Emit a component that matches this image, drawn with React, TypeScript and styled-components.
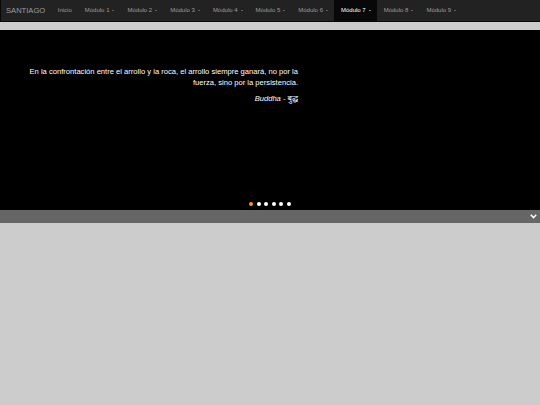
import React from 'react';
import styled, { createGlobalStyle } from 'styled-components';

const modules = [1, 2, 3, 4, 5, 6, 7, 8, 9];
const ACTIVE = 7;

const Global = createGlobalStyle`
  html, body {
    margin: 0;
    padding: 0;
    background: #cccccc;
    font-family: "Liberation Sans", Arial, sans-serif;
  }
`;

const Page = styled.div`
  width: 540px;
  height: 405px;
  background: #cccccc;
  display: flex;
  flex-direction: column;
`;

const Navbar = styled.nav`
  height: 22px;
  background: #222222;
  border-left: 1px solid #080808;
  border-bottom: 1px solid #080808;
  box-sizing: border-box;
  display: flex;
  align-items: stretch;
`;

const Brand = styled.a`
  color: #9d9d9d;
  font-size: 7.6px;
  line-height: 22px;
  padding: 0 6px 0 5px;
`;

const NavItem = styled.a<{ $active?: boolean }>`
  color: ${p => (p.$active ? '#ffffff' : '#9d9d9d')};
  background: ${p => (p.$active ? '#080808' : 'transparent')};
  font-size: 6px;
  line-height: 21px;
  padding: 0 6.5px;
  white-space: nowrap;
  display: flex;
  align-items: center;
  gap: 2px;
`;

const Caret = styled.span`
  display: inline-block;
  width: 0;
  height: 0;
  border-left: 1.6px solid transparent;
  border-right: 1.6px solid transparent;
  border-top: 1.8px solid currentColor;
  margin-left: 1px;
`;

const Spacer = styled.div`
  height: 8px;
`;

const Carousel = styled.section`
  height: 180px;
  background: #000000;
  position: relative;
  display: flex;
  flex-direction: column;
`;

const Quote = styled.blockquote`
  margin: 36px 0 0 24px;
  width: 274px;
  text-align: right;
  color: #ffffff;
  font-size: 7.6px;
  line-height: 11px;
`;

const Author = styled.div`
  margin-top: 5px;
  font-style: italic;
  font-family: "Liberation Sans", "Noto Sans", "DejaVu Sans", sans-serif;
`;

const Dots = styled.div`
  position: absolute;
  left: 249px;
  bottom: 4px;
  display: flex;
  gap: 3.6px;
`;

const Dot = styled.span<{ $on?: boolean }>`
  width: 4px;
  height: 4px;
  border-radius: 50%;
  background: ${p => (p.$on ? '#f39c12' : '#ffffff')};
`;

const Bar = styled.div`
  height: 13px;
  background: #666666;
  display: flex;
  justify-content: flex-end;
  align-items: center;
  padding-right: 3px;
`;

export default function App() {
  return (
    <Page>
      <Global />
      <Navbar>
        <Brand>SANTIAGO</Brand>
        <NavItem>Inicio</NavItem>
        {modules.map(n => (
          <NavItem key={n} $active={n === ACTIVE}>
            Módulo {n}
            <Caret />
          </NavItem>
        ))}
      </Navbar>
      <Spacer />
      <Carousel>
        <Quote>
          En la confrontación entre el arrollo y la roca, el arrollo siempre ganará, no por la
          fuerza, sino por la persistencia.
          <Author>Buddha - बुद्ध</Author>
        </Quote>
        <Dots>
          {[0, 1, 2, 3, 4, 5].map(i => (
            <Dot key={i} $on={i === 0} />
          ))}
        </Dots>
      </Carousel>
      <Bar>
        <svg width="7" height="5" viewBox="0 0 7 5">
          <path d="M0.8 0.8 L3.5 3.6 L6.2 0.8" stroke="#ffffff" strokeWidth="1.5" fill="none" />
        </svg>
      </Bar>
    </Page>
  );
}
